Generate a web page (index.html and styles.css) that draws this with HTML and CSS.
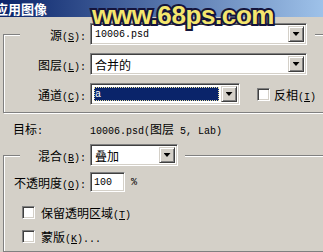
FILE: index.html
```html
<!DOCTYPE html>
<html lang="zh-CN">
<head>
    <meta charset="UTF-8">
    <meta name="viewport" content="width=device-width, initial-scale=1.0">
    <title>应用图像</title>
    <link rel="stylesheet" href="styles.css">
</head>
<body>
    <div class="dialog">
        <div class="titlebar">
            <span class="title">应用图像</span>
            <span class="watermark">www.68ps.com</span>
        </div>

        <fieldset class="group source">
            <legend class="line">
                <label class="lbl">源<span class="en">(<u>S</u>):</span></label>
                <div class="combo wide">
                    <span class="val"><span class="en">10006.psd</span></span>
                    <span class="drop"></span>
                </div>
            </legend>
            <div class="row">
                <label class="lbl">图层<span class="en">(<u>L</u>):</span></label>
                <div class="combo wide">
                    <span class="val">合并的</span>
                    <span class="drop"></span>
                </div>
            </div>
            <div class="row">
                <label class="lbl">通道<span class="en">(<u>C</u>):</span></label>
                <div class="combo mid">
                    <span class="val sel"><span class="en">a</span></span>
                    <span class="drop"></span>
                </div>
                <div class="check invert">
                    <span class="box"></span>
                    <span>反相<span class="en">(<u>I</u>)</span></span>
                </div>
            </div>
        </fieldset>

        <div class="target">
            <span class="tlbl">目标<span class="en">:</span></span>
            <span><span class="en">10006.psd(</span>图层<span class="en"> 5, Lab)</span></span>
        </div>

        <fieldset class="group blend">
            <legend class="line">
                <label class="lbl">混合<span class="en">(<u>B</u>):</span></label>
                <div class="combo short">
                    <span class="val">叠加</span>
                    <span class="drop"></span>
                </div>
            </legend>
            <div class="row tall">
                <label class="lbl">不透明度<span class="en">(<u>O</u>):</span></label>
                <div class="num"><span class="en">100</span></div>
                <span class="pct en">%</span>
            </div>
            <div class="check first">
                <span class="box"></span>
                <span>保留透明区域<span class="en">(<u>T</u>)</span></span>
            </div>
            <div class="check">
                <span class="box"></span>
                <span>蒙版<span class="en">(<u>K</u>)...</span></span>
            </div>
        </fieldset>
    </div>
</body>
</html>
```

FILE: styles.css
```css
html, body {
    margin: 0;
    padding: 0;
    height: 100%;
    overflow: hidden;
}

body {
    background-color: #d4d0c8;
    font-family: "Noto Sans CJK SC", sans-serif;
    font-size: 12px;
    color: #000;
}

.en {
    font-family: "Liberation Mono", monospace;
    font-size: 10px;
}

.dialog {
    width: 340px;
    position: relative;
}

.titlebar {
    height: 17px;
    line-height: 17px;
    background: linear-gradient(to right, #0a246a, #a6caf0);
    color: #fff;
    font-weight: bold;
    font-size: 13px;
    white-space: nowrap;
}

.title {
    margin-left: -5px;
}

/* site watermark stamped over the screenshot */
.watermark {
    position: absolute;
    left: 92px;
    top: 1px;
    z-index: 2;
    font-family: "Liberation Sans", sans-serif;
    font-size: 26px;
    line-height: 28px;
    font-weight: bold;
    letter-spacing: -0.4px;
    color: #f4e66e;
    -webkit-text-stroke: 4px #14143c;
    paint-order: stroke fill;
}

.group {
    margin: 6px 0 0 3px;
    padding: 0 0 7px 16px;
    border: 1px solid #808080;
    box-shadow: 1px 1px 0 #fff, inset 1px 1px 0 #fff;
    min-width: 0;
}

.group legend {
    padding: 0 8px 0 0;
    background-color: #d4d0c8;
}

.blend legend {
    padding-right: 7px;
}

.line,
.row {
    display: flex;
    align-items: center;
    height: 22px;
    white-space: nowrap;
}

.row {
    margin-top: 8px;
}

.lbl {
    width: 66px;
    padding-right: 4px;
    text-align: right;
}

.combo {
    box-sizing: border-box;
    height: 22px;
    padding: 2px;
    display: flex;
    background-color: #fff;
    border: 1px solid;
    border-color: #808080 #fff #fff #808080;
    box-shadow: inset 1px 1px 0 #404040, inset -1px -1px 0 #d4d0c8;
}

.wide {
    width: 217px;
}

.mid {
    width: 150px;
}

.short {
    width: 88px;
}

.val {
    flex: 1;
    display: flex;
    align-items: center;
    padding-left: 2px;
}

.val.sel {
    margin: 1px 2px 1px 1px;
    padding-left: 1px;
    background-color: #0a246a;
    color: #fff;
    outline: 1px dotted #e8e0a0;
    outline-offset: -1px;
}

.drop {
    box-sizing: border-box;
    width: 16px;
    display: flex;
    align-items: center;
    justify-content: center;
    background-color: #d4d0c8;
    border: 1px solid;
    border-color: #d4d0c8 #404040 #404040 #d4d0c8;
    box-shadow: inset 1px 1px 0 #fff, inset -1px -1px 0 #808080;
}

.drop::after {
    content: "";
    width: 7px;
    height: 4px;
    background-color: #000;
    clip-path: polygon(0 0, 100% 0, 50% 100%);
}

.check {
    display: flex;
    align-items: center;
    height: 16px;
    margin-top: 8px;
    margin-left: 2px;
    white-space: nowrap;
}

.check .box {
    box-sizing: border-box;
    width: 13px;
    height: 13px;
    margin-right: 6px;
    background-color: #fff;
    border: 1px solid;
    border-color: #808080 #fff #fff #808080;
    box-shadow: inset 1px 1px 0 #404040, inset -1px -1px 0 #d4d0c8;
}

.check.first {
    margin-top: 12px;
}

.check.invert {
    margin: 0 0 0 17px;
}

.check.invert .box {
    margin-right: 4px;
}

.target {
    margin-top: 9px;
    height: 16px;
    line-height: 16px;
    padding-left: 13px;
    display: flex;
    align-items: center;
    white-space: nowrap;
}

.tlbl {
    width: 77px;
}

.row.tall {
    height: 20px;
    margin-top: 6px;
}

.row.tall .lbl {
    width: 72px;
    margin-left: -6px;
}

.num {
    box-sizing: border-box;
    width: 35px;
    height: 20px;
    padding-left: 3px;
    display: flex;
    align-items: center;
    background-color: #fff;
    border: 1px solid;
    border-color: #808080 #fff #fff #808080;
    box-shadow: inset 1px 1px 0 #404040, inset -1px -1px 0 #d4d0c8;
}

.pct {
    margin-left: 6px;
}
```
